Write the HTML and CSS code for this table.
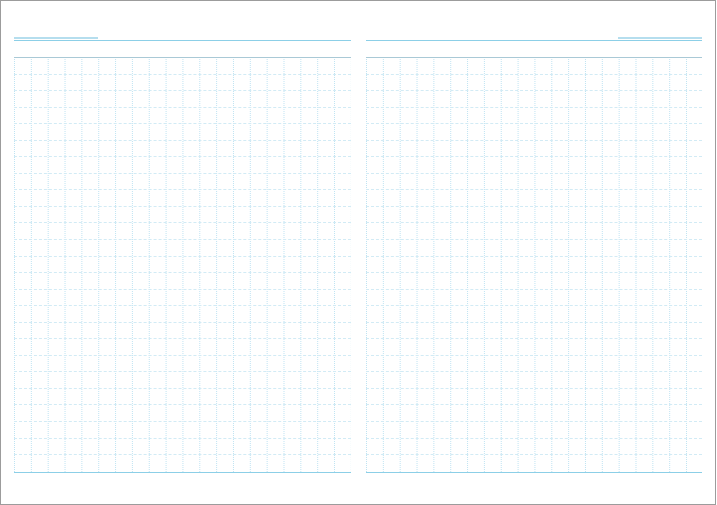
FILE: index.html
```html
<!DOCTYPE html>
<html lang="en">
<head>
  <meta charset="UTF-8" />
  <title>Grid notebook spread</title>
  <link rel="stylesheet" href="styles.css">
</head>
<body>
<div class="sheet">
  <div class="page page-left">
    <div class="rule-short"></div>
    <div class="rule-long"></div>
    <div class="grid"></div>
  </div>
  <div class="page page-right">
    <div class="rule-short"></div>
    <div class="rule-long"></div>
    <div class="grid"></div>
  </div>
</div>
<script>
  // 25 rows on each page
  document.querySelectorAll('.grid').forEach(g => {
    for (let i = 0; i < 25; i++) {
      const r = document.createElement('div');
      r.className = 'row';
      g.appendChild(r);
    }
  });
</script>
</body>
</html>
```

FILE: styles.css
```css
* { box-sizing: border-box; margin: 0; padding: 0; }
html, body { width: 100%; height: 100%; background: #fff; font-family: "Liberation Sans", sans-serif; }
.sheet {
  width: 716px; height: 505px;
  border: 1px solid #9c9c9c;
  padding: 36px 13px 0;
  display: flex; gap: 15px;
  background: #fff;
}
.page { width: 337px; display: flex; flex-direction: column; }
.page-left { align-items: flex-start; }
.page-right { align-items: flex-end; }
.rule-short { width: 84px; height: 2px; background: #b5deee; margin-bottom: 1px; }
.rule-long { width: 100%; height: 1px; background: #8ccfe7; margin-bottom: 16px; }
.grid {
  width: 100%;
  display: flex; flex-direction: column;
  border-top: 1px solid #a9c9d6;
  border-bottom: 1px solid #8ccfe7;
  background:
    repeating-linear-gradient(to bottom, #fff 0 1px, transparent 1px 2px),
    linear-gradient(to right, #bfe3f2 1px, transparent 1px) 0 0 / 16.85px 100%;
}
.row { height: 16.56px; border-bottom: 1px dashed #d2ebf5; flex: none; }
.row:last-child { border-bottom: none; }
```
